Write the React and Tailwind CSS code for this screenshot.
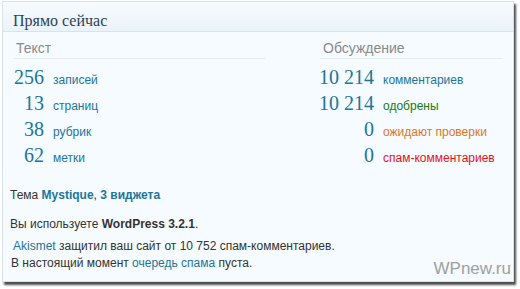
import React from "react";

const serif = { fontFamily: '"Liberation Serif", "DejaVu Serif", serif' };

function StatRow({ num, label, color, numW }) {
  return (
    <div className="flex items-baseline h-[26px]">
      <span
        className={`${numW} shrink-0 flex justify-end whitespace-nowrap text-[20px] leading-none text-[#21759b]`}
        style={serif}
      >
        {num}
      </span>
      <span className={`ml-[9px] whitespace-nowrap text-[12px] ${color}`}>{label}</span>
    </div>
  );
}

export default function App() {
  const left = [
    ["256", "записей"],
    ["13", "страниц"],
    ["38", "рубрик"],
    ["62", "метки"],
  ];
  const right = [
    ["10 214", "комментариев", "text-[#21759b]"],
    ["10 214", "одобрены", "text-[#1b7a12]"],
    ["0", "ожидают проверки", "text-[#e0761f]"],
    ["0", "спам-комментариев", "text-[#e8101a]"],
  ];

  return (
    <div
      className="w-[520px] h-[289px] bg-white pt-[1px] pl-[2px]"
      style={{ fontFamily: '"Liberation Sans", Arial, sans-serif' }}
    >
      <div className="relative w-[512px] h-[281px] border border-[#d8e2e8] bg-[#f5fbfe] shadow-[2px_3px_2px_rgba(0,0,0,0.7)] text-[#333]">
        <div className="h-[30px] border-b border-[#d6e4ec] bg-gradient-to-b from-[#f7fbfe] to-[#eaf3fa] pl-[10px] pt-[7px]">
          <span className="text-[16px] text-[#2d4354]" style={serif}>
            Прямо сейчас
          </span>
        </div>

        <div className="flex pt-[3px]">
          <div className="w-[252px] ml-[10px]">
            <div className="h-[24px] border-b border-[#e4ecf0] pl-[3px] text-[14px] text-[#8a8a8a] pt-[3px]">
              Текст
            </div>
            <div className="pt-[8px]">
              {left.map(([n, l]) => (
                <StatRow key={l} num={n} label={l} color="text-[#21759b]" numW="w-[31px]" />
              ))}
            </div>
          </div>
          <div className="w-[183px] ml-[55px]">
            <div className="h-[24px] border-b border-[#e4ecf0] pl-[3px] text-[14px] text-[#8a8a8a] pt-[3px]">
              Обсуждение
            </div>
            <div className="pt-[8px]">
              {right.map(([n, l, c]) => (
                <StatRow key={l} num={n} label={l} color={c} numW="w-[54px]" />
              ))}
            </div>
          </div>
        </div>

        <div className="pl-[7px] pt-[15px] text-[12px]">
          <p>
            Тема <a className="font-bold text-[#21759b]">Mystique</a>,{" "}
            <a className="font-bold text-[#21759b]">3 виджета</a>
          </p>
          <p className="mt-[11px]">
            Вы используете <span className="font-bold">WordPress 3.2.1</span>.
          </p>
          <p className="mt-[5px] pl-[1px] leading-[17px]">
            <a className="ml-[2px] text-[#21759b]">Akismet</a> защитил ваш сайт от 10 752
            спам-комментариев.
            <br />
            В настоящий момент <a className="text-[#21759b]">очередь спама</a> пуста.
          </p>
        </div>

        <div className="absolute right-[2px] bottom-[0px] text-[17px] text-[#a0a0a0]">
          WPnew.ru
        </div>
      </div>
    </div>
  );
}
